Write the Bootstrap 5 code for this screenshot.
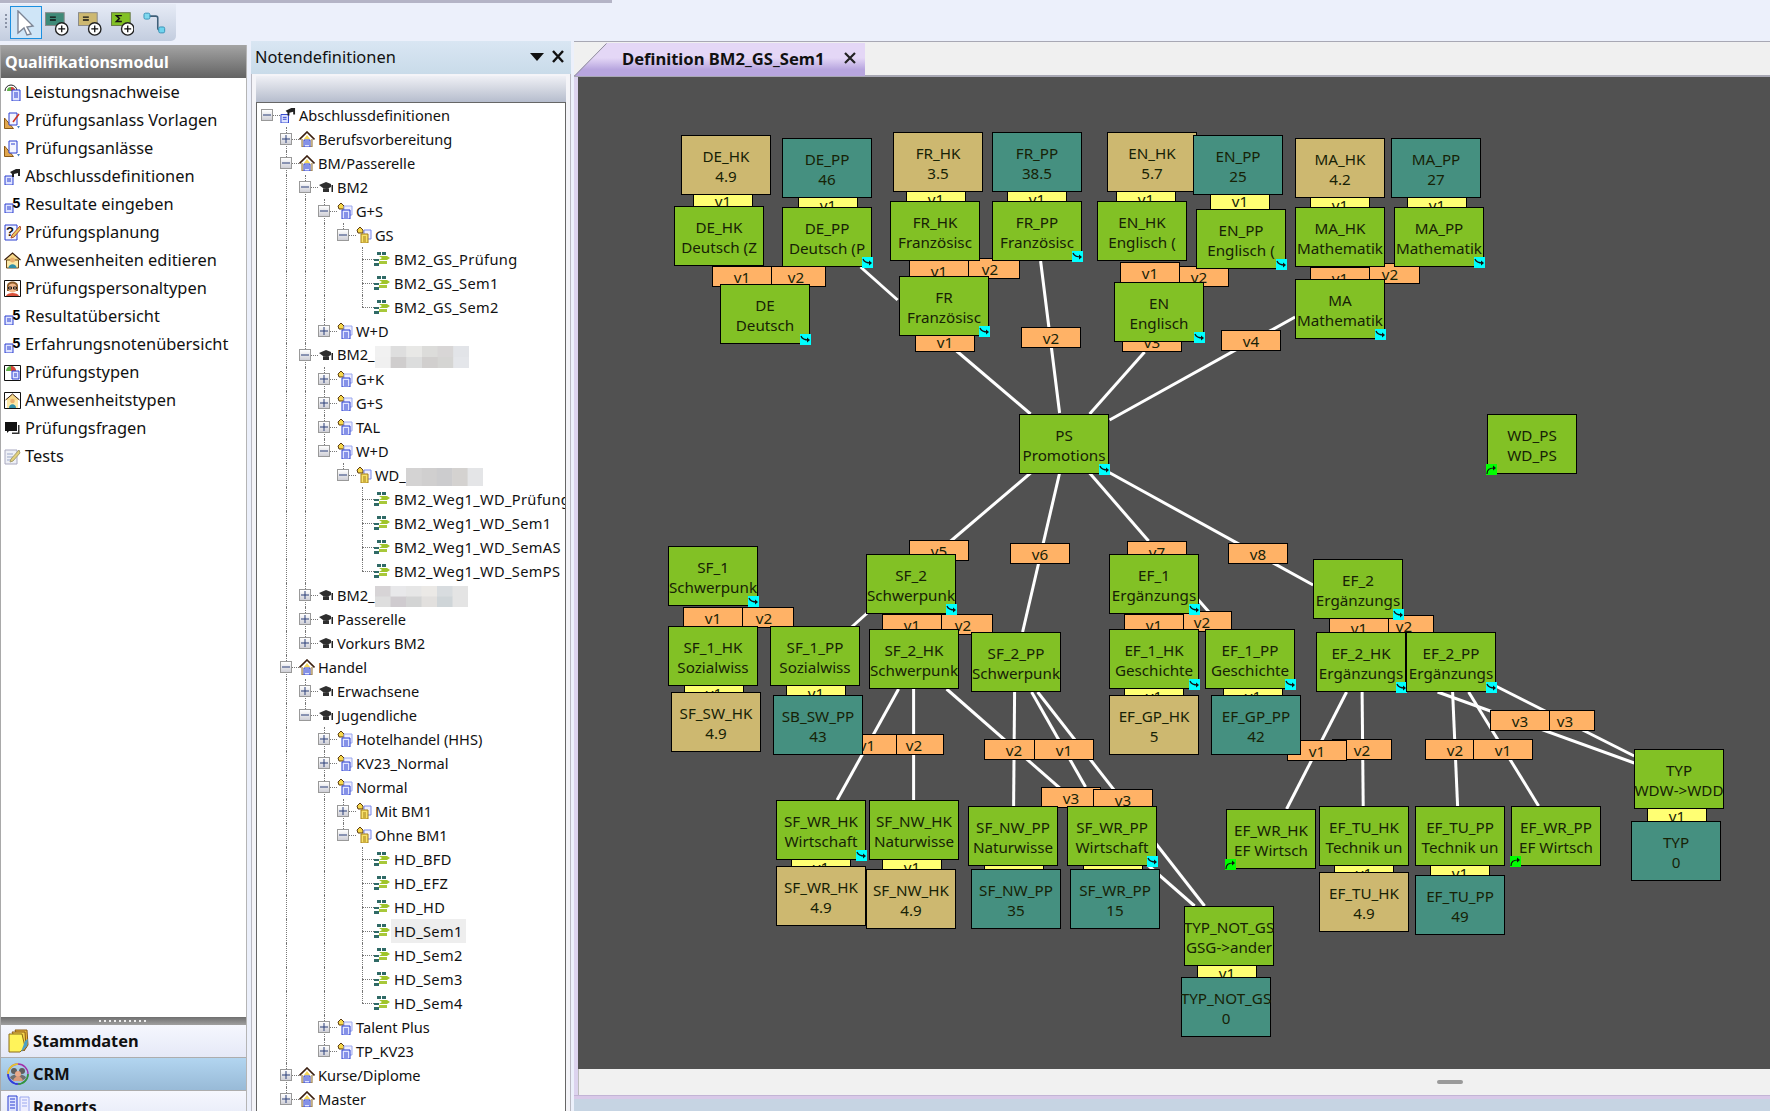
<!DOCTYPE html>
<html lang="de">
<head>
    <meta charset="UTF-8">
    <title>Definition BM2_GS_Sem1</title>
    <link href="https://cdn.jsdelivr.net/npm/bootstrap@5.3.3/dist/css/bootstrap.min.css" rel="stylesheet">
    <style>
        html, body { height: 100%; margin: 0; overflow: hidden; }
        body { background: #ecf0fb; font-family: "Noto Sans", "Liberation Sans", sans-serif; color: #111; width: 1770px; height: 1111px; }
        .top-area { height: 41px; position: relative; }
        .top-line { height: 3px; width: 612px; background: #b4b4c6; }
        .tool-strip { margin-top: 1px; width: 176px; height: 37px; background: linear-gradient(#e6ebf6, #c3cddf); border-radius: 0 0 5px 0; padding: 2px 0 0 5px; }
        .tool-grip { width: 2px; height: 16px; margin: 8px 3px 0 0; background: repeating-linear-gradient(#8b93a6 0 2px, transparent 2px 4px); }
        .tool-sel { width: 33px; height: 33px; background: #cfe5f7; border: 1px solid #1b8fe0; margin-right: 3px; }
        .tool-icon { width: 24px; height: 24px; margin: 6px 9px 0 0; }
        .main-area { height: 1070px; }

        .left-panel { width: 247px; margin-top: 4px; background: #fff; border-left: 1px solid #a9a9a9; border-right: 1px solid #b5b5b5; overflow: hidden; }
        .left-head { height: 33px; flex: none; background: linear-gradient(#a4a4a4, #636363); color: #fff; font-weight: 700; font-size: 16px; line-height: 35px; padding-left: 4px; }
        .left-list { height: 939px; flex: none; }
        .left-item { height: 28px; font-size: 16.4px; line-height: 28px; padding-left: 3px; gap: 4px; }
        .left-item svg { width: 17px; height: 17px; flex: none; }
        .left-split { height: 8px; flex: none; background: linear-gradient(#6f6f6f, #a0a0a0); }
        .split-dots { width: 48px; height: 2px; margin-left: 98px; background: repeating-linear-gradient(90deg, #eee 0 2px, transparent 2px 5px); position: relative; top: 3px; }
        .left-btn { height: 33px; flex: none; font-weight: 700; font-size: 16.4px; padding-left: 5px; gap: 3px; background: linear-gradient(#f5f7fe, #e5e9f7); border-bottom: 1px solid #adadad; }
        .left-btn svg { width: 24px; height: 24px; flex: none; }
        .left-btn.is-active { background: linear-gradient(#b2d5f0, #98bad7); }

        .tree-panel { width: 320px; margin-left: 4px; background: #fff; }
        .tree-head { height: 33px; background: linear-gradient(#d9e6f3, #c9dbe9); font-size: 16.4px; line-height: 33px; padding: 0 6px 2px 4px; }
        .tree-body { border-left: 1px solid #b9b9c2; border-right: 1px solid #b9b9c2; padding: 2px 4px 0; height: 1037px; background: #f4f4f8; }
        .tree-bar { height: 27px; background: linear-gradient(#eff0f5, #b6bdcd); border-bottom: 1px solid #666; }
        .tree-list { background: #fff; height: 1008px; overflow: hidden; border-left: 1px solid #666; border-right: 1px solid #666; }
        .tree-row { height: 24px; position: relative; font-size: 14.6px; line-height: 24px; white-space: nowrap; }
        .tree-toggle { width: 12px; height: 12px; flex: none; border: 1px solid #999; background: linear-gradient(#fff, #cfcfd6); position: relative; z-index: 1; }
        .tree-toggle svg { display: block; width: 10px; height: 10px; }
        .tree-gap { width: 12px; flex: none; }
        .tree-pic { width: 16px; height: 16px; flex: none; margin: 0 3px 0 7px; position: relative; z-index: 1; }
        .leaf-pic { margin-left: 6px; margin-right: 4px; }
        .leaf-text { letter-spacing: .35px; }
        .guide-v { position: absolute; width: 0; border-left: 1px dotted #777; }
        .guide-h { position: absolute; top: 12px; height: 0; border-top: 1px dotted #777; }
        .tree-sel { background: #eeeeee; padding: 0 3px; margin-left: -3px; }
        .blur-patch { display: inline-block; vertical-align: middle; }

        .doc-panel { margin-left: 3px; flex: 1 1 0; min-width: 0; }
        .tab-strip { height: 36px; background: #f0f0f0; border-top: 1px solid #a8a8b4; border-bottom: 2px solid #a8a8b4; position: relative; }
        .doc-tab { position: absolute; left: 0; top: 1px; width: 291px; height: 33px; background: linear-gradient(#e4d7f6 0, #e4d7f6 45%, #b8a6df 80%, #b8a6df 100%); clip-path: polygon(0 100%, 32px 0, 100% 0, 100% 100%); font-weight: 700; font-size: 16.6px; line-height: 31px; padding-left: 48px; gap: 18px; }
        .tab-slant { position: absolute; left: 0; top: 1px; }
        .doc-frame { border-left: 4px solid #dcd3ee; }
        .flow-canvas { height: 992px; background: #515151; position: relative; overflow: hidden; font-size: 15.2px; color: #172206; }
        .flow-lines { position: absolute; left: 0; top: 0; }
        .flow-node, .flow-tag { position: absolute; border: 1px solid #000; text-align: center; white-space: nowrap; }
        .flow-node { width: 90px; height: 60px; padding-top: 10px; line-height: 20px; }
        .flow-tag { width: 60px; height: 21px; line-height: 20px; overflow: hidden; }
        .node-clip { overflow: hidden; display: flex; flex-direction: column; align-items: center; height: 40px; margin: 0 -1px; }
        .fill-green { background: #82c125; }
        .fill-tan { background: #cdb870; }
        .fill-teal { background: #459080; }
        .fill-orange { background: #ffb266; }
        .fill-yellow { background: #ffff73; }
        .node-jump { position: absolute; width: 11px; height: 11px; bottom: -2px; }
        .node-jump svg { display: block; width: 11px; height: 11px; }
        .jump-out { right: -2px; background: #00ffff; }
        .jump-in { left: -2px; background: #00ff00; }
        .doc-foot { height: 26px; background: #f1f1f1; position: relative; border-left: 1px solid #bbb; }
        .foot-grip { position: absolute; left: 858px; top: 11px; width: 26px; height: 4px; border-radius: 2px; background: #9a9a9a; }
        .foot-line { height: 4px; background: #d8c9e8; border-top: 1px solid #c3b4d6; }
        .foot-rest { height: 12px; background: #c6d4e3; }
    </style>
</head>
<body>
<svg width="0" height="0" class="position-absolute">
    <defs>
        <symbol id="i-house" viewBox="0 0 16 16"><path d="M3 8v8h10V8" fill="#fff4cf" stroke="#8a6a30"/><path d="M0.5 8.5 8 1l7.5 7.5" fill="none" stroke="#3b2010" stroke-width="1.6"/><path d="M5 8l3-4 3 4z" fill="#f5d75a"/><path d="M5 9h6v7H5z" fill="#dfe4ff" stroke="#2a3fd0"/><path d="M6 11h4M6 13h4" stroke="#2a3fd0"/></symbol>
        <symbol id="i-hat" viewBox="0 0 16 16"><path d="M1 6l7-3 5 2v3l-2 1v4H5V9z" fill="#2f2f2f"/><path d="M13.5 6v7H15V6z" fill="#222"/><path d="M5 9l4 1 2-1v1H5z" fill="#777"/></symbol>
        <symbol id="i-grp" viewBox="0 0 16 16"><path d="M1 3l3-3 3 3v3H2z" fill="#f7d84a" stroke="#5b3a10"/><path d="M7 3h8v9H7z" fill="#eef" stroke="#9aa7ee"/><path d="M5 7h8v9H5z" fill="#dfe4ff" stroke="#2a3fd0"/><path d="M7 10h4M7 12h4M7 14h4" stroke="#2a3fd0"/></symbol>
        <symbol id="i-grpy" viewBox="0 0 16 16"><path d="M1 3l3-3 3 3v3H2z" fill="#f7d84a" stroke="#5b3a10"/><path d="M8 3h7v9H8z" fill="#eef" stroke="#7a88e8"/><path d="M5 7h7v9H5z" fill="#f8e26a" stroke="#a37c14"/><path d="M7 10h3M7 12h3M7 14h3" stroke="#a37c14"/></symbol>
        <symbol id="i-leaf" viewBox="0 0 16 16"><path d="M3 1h4v3H3zM8 1h4v3H8zM0 12h5v3H0zM0 8h5v2H0z" fill="#2f6a66"/><path d="M5 5h8l3 2-3 2H5l3-2z" fill="#9fc428"/><path d="M5 10h8v3H5z" fill="#a8c83a"/></symbol>
        <symbol id="i-minus" viewBox="0 0 10 10"><path d="M1 5h8" stroke="#2b3f79"/></symbol>
        <symbol id="i-plus" viewBox="0 0 10 10"><path d="M1 5h8M5 1v8" stroke="#2b3f79"/></symbol>

        <symbol id="i-lei" viewBox="0 0 17 17"><path d="M1 7a6 6 0 0 1 12 0" fill="none" stroke="#222" stroke-width="1"/><path d="M3 7a4 4 0 0 1 8 0z" fill="#5fb04a"/><path d="M7 3a4 4 0 0 1 4 4H7z" fill="#d8423a"/><path d="M8 6h8v11H8z" fill="#dfe4ff" stroke="#2a3fd0"/><path d="M10 9h4M10 11h4M10 13h4" stroke="#2a3fd0"/></symbol>
        <symbol id="i-vor" viewBox="0 0 17 17"><path d="M0.5 16.5V6l9 10.5z" fill="#e0a64e" stroke="#8a5a18"/><path d="M5 1h8v12H5z" fill="#f4f5ff" stroke="#2a3fd0"/><path d="M15 2L9 10" stroke="#cc3322" stroke-width="1.6"/><path d="M13 14l3 0-1.5 2.5z" fill="#4a7fc0"/></symbol>
        <symbol id="i-anl" viewBox="0 0 17 17"><path d="M0.5 16.5V6l9 10.5z" fill="#e0a64e" stroke="#8a5a18"/><path d="M5 1h8v12H5z" fill="#f4f5ff" stroke="#2a3fd0"/><path d="M7 4h4" stroke="#2a3fd0"/><path d="M13 14l3 0-1.5 2.5z" fill="#4a7fc0"/></symbol>
        <symbol id="i-abs" viewBox="0 0 17 17"><path d="M1 8h8v9H1z" fill="#dfe4ff" stroke="#2a3fd0"/><path d="M3 11h4M3 13h4" stroke="#2a3fd0"/><path d="M6 4l6-3h4v7h-2V5l-4 1v3H8V6z" fill="#222"/></symbol>
        <symbol id="i-res" viewBox="0 0 17 17"><path d="M1 8h8v9H1z" fill="#dfe4ff" stroke="#2a3fd0"/><path d="M3 11h4M3 13h4" stroke="#2a3fd0"/><text x="8.5" y="12" font-family="Liberation Sans" font-weight="700" font-size="14" fill="#000">5</text></symbol>
        <symbol id="i-plan" viewBox="0 0 17 17"><path d="M1 1h12v15H1z" fill="#f4f5ff" stroke="#2a3fd0"/><text x="2" y="12" font-family="Liberation Sans" font-weight="700" font-size="13" fill="#111">?</text><path d="M16 2L8 11l-1 3 3-1 7-8z" fill="#e8c75a" stroke="#b04a30"/></symbol>
        <symbol id="i-anw" viewBox="0 0 17 17"><path d="M0.5 8L8.5 1l8 7" fill="#f7d98a" stroke="#3b2010" stroke-width="1.2"/><path d="M2.5 8h12v8h-12z" fill="#fbe9a8" stroke="#6b4a18"/><circle cx="8.5" cy="8" r="2.5" fill="#e8b070"/><path d="M4.5 16c0-5 8-5 8 0z" fill="#2f8fa8"/></symbol>
        <symbol id="i-per" viewBox="0 0 17 17"><path d="M0.5 0.5h16v16H0.5z" fill="#fff" stroke="#111"/><path d="M3 6c0-6 11-6 11 0v5H3z" fill="#8a5a28"/><circle cx="8.5" cy="8" r="4.5" fill="#f2b88a"/><path d="M4.5 7h3v2h-3zM9.5 7h3v2h-3z" fill="none" stroke="#222"/><path d="M2 16c1-4 12-4 13 0z" fill="#d9503a"/></symbol>
        <symbol id="i-typ" viewBox="0 0 17 17"><path d="M0.5 1.5h16v15H0.5z" fill="#fff" stroke="#111"/><path d="M2 7a5 5 0 0 1 10 0z" fill="#5fb04a"/><path d="M7 2a5 5 0 0 1 5 5H7z" fill="#d8423a"/><path d="M8 7h7v8H8z" fill="#dfe4ff" stroke="#2a3fd0"/><path d="M10 10h3M10 12h3" stroke="#2a3fd0"/></symbol>
        <symbol id="i-anwt" viewBox="0 0 17 17"><path d="M0.5 0.5h16v16H0.5z" fill="#fff" stroke="#111"/><path d="M1.5 8L8.5 2l7 6" fill="#f7d98a" stroke="#3b2010"/><path d="M3 8h11v8H3z" fill="#fbe9a8"/><circle cx="8.5" cy="9" r="2.3" fill="#e8b070"/><path d="M5 16c0-5 7-5 7 0z" fill="#2f8fa8"/></symbol>
        <symbol id="i-frag" viewBox="0 0 17 17"><path d="M1 2h12v9H5l-2 2v-2H1z" fill="#111"/><path d="M14 5h1.5v9H8v-1.5h6z" fill="#333"/></symbol>
        <symbol id="i-test" viewBox="0 0 17 17"><path d="M1 2h12v14H1z" fill="#eef0f6" stroke="#a9a9c0"/><path d="M3 6h6M3 9h6M3 12h6" stroke="#9ba7c8"/><path d="M15 2L7 11l-1 3 3-1 7-8z" fill="#e2d07a" stroke="#a8a070"/></symbol>
        <symbol id="i-stamm" viewBox="0 0 24 24"><path d="M9 1h12l1 15-4 6z" fill="#e9b93a" stroke="#8a5a18"/><path d="M6 3h13l1 16-4 3z" fill="#f4d34a" stroke="#8a5a18"/><path d="M3 5h13l3 13-5 5H3z" fill="#fff35a" stroke="#8a6a18"/><path d="M19 12l3-2-1 7-6 6z" fill="#4aa0c8"/></symbol>
        <symbol id="i-crm" viewBox="0 0 24 24"><circle cx="12" cy="12" r="10" fill="none" stroke="#a32ea8" stroke-width="1.4"/><path d="M2 12a10 10 0 0 1 10-10" fill="none" stroke="#e8c82a" stroke-width="1.6"/><path d="M2 12a10 10 0 0 0 10 10" fill="none" stroke="#2a3fe0" stroke-width="1.6"/><path d="M12 22a10 10 0 0 0 10-10" fill="none" stroke="#2c9c3a" stroke-width="1.6"/><circle cx="8" cy="9" r="3" fill="#5e5e5e"/><circle cx="16" cy="9" r="3" fill="#5e5e5e"/><path d="M4 16c1-5 15-5 16 0l-4 3H8z" fill="#6f6f6f"/><circle cx="12" cy="12" r="3" fill="#e9a98a"/><path d="M7 19c1-6 9-6 10 0z" fill="#d99a7a"/></symbol>
        <symbol id="i-rep" viewBox="0 0 24 24"><path d="M2 1h9v17H2z" fill="#dfe4ff" stroke="#2a3fd0"/><path d="M4 4h5M4 7h5M4 10h5M4 13h5" stroke="#2a3fd0"/><path d="M14 2h9v16h-9z" fill="#eef" stroke="#9aa7ee"/><path d="M16 5h5M16 8h5M16 11h5" stroke="#9aa7ee"/></symbol>
        <symbol id="i-jumpout" viewBox="0 0 11 11"><path d="M1 2c1 3 3 4 8 4" fill="none" stroke="#111" stroke-width="1.2"/><path d="M7 3.5 10 6 7 8.5z" fill="#111"/></symbol>
        <symbol id="i-jumpin" viewBox="0 0 11 11"><path d="M1 10c0-4 2-6 7-6" fill="none" stroke="#111" stroke-width="1.2"/><path d="M7 1.5 10 4 7 6.5z" fill="#111"/></symbol>
    </defs>
</svg>

<div class="top-area">
    <div class="top-line"></div>
    <div class="tool-strip d-flex align-items-start">
        <div class="tool-grip"></div>
        <div class="tool-sel d-flex align-items-center justify-content-center">
            <svg width="22" height="26" viewBox="0 0 22 26"><path d="M3 1l15 15-6 1 4 7-4 1-3-7-6 5z" fill="#fff" stroke="#7c8494" stroke-width="1.4"/></svg>
        </div>
        <svg class="tool-icon" viewBox="0 0 24 24"><rect x="0.5" y="0.5" width="19" height="13" fill="#3f8a78" stroke="#8a8a8a"/><path d="M5 5h6M5 8h6" stroke="#111" stroke-width="1.4"/><circle cx="17" cy="17" r="6.3" fill="#fff" stroke="#222" stroke-width="1.4"/><path d="M13.5 17h7M17 13.5v7" stroke="#111" stroke-width="1.3"/></svg>
        <svg class="tool-icon" viewBox="0 0 24 24"><rect x="0.5" y="0.5" width="19" height="13" fill="#cdb870" stroke="#8a8a8a"/><path d="M5 5h6M5 8h6" stroke="#111" stroke-width="1.4"/><circle cx="17" cy="17" r="6.3" fill="#fff" stroke="#222" stroke-width="1.4"/><path d="M13.5 17h7M17 13.5v7" stroke="#111" stroke-width="1.3"/></svg>
        <svg class="tool-icon" viewBox="0 0 24 24"><rect x="0.5" y="0.5" width="19" height="13" fill="#82c125" stroke="#6a7a4a"/><path d="M11 3.5H5.5l3 3-3 3H11" fill="none" stroke="#111" stroke-width="1.5"/><circle cx="17" cy="17" r="6.3" fill="#fff" stroke="#222" stroke-width="1.4"/><path d="M13.5 17h7M17 13.5v7" stroke="#111" stroke-width="1.3"/></svg>
        <svg class="tool-icon" viewBox="0 0 24 24"><path d="M6 4h7a2 2 0 0 1 2 2v10a2 2 0 0 0 2 2h2" fill="none" stroke="#3f5f78" stroke-width="1.6"/><rect x="1" y="1" width="6" height="6" rx="1.5" fill="#7fd8ee" stroke="#3a93b8"/><rect x="16" y="15" width="6" height="6" rx="1.5" fill="#6fd4ee" stroke="#3a93b8"/></svg>
    </div>
</div>

<div class="main-area d-flex">
    <div class="left-panel d-flex flex-column">
        <div class="left-head">Qualifikationsmodul</div>
        <div class="left-list" id="leftList"></div>
        <div class="left-split"><div class="split-dots"></div></div>
        <div class="left-btn d-flex align-items-center"><svg><use href="#i-stamm"/></svg>Stammdaten</div>
        <div class="left-btn is-active d-flex align-items-center"><svg><use href="#i-crm"/></svg>CRM</div>
        <div class="left-btn d-flex align-items-center"><svg><use href="#i-rep"/></svg>Reports</div>
    </div>

    <div class="tree-panel d-flex flex-column">
        <div class="tree-head d-flex align-items-center justify-content-between">
            <span>Notendefinitionen</span>
            <svg width="36" height="16" viewBox="0 0 36 16"><path d="M1 4h14l-7 8z" fill="#111"/><path d="M24 2l10 11M34 2L24 13" stroke="#111" stroke-width="2.4"/></svg>
        </div>
        <div class="tree-body">
            <div class="tree-bar"></div>
            <div class="tree-list" id="treeList"></div>
        </div>
    </div>

    <div class="doc-panel d-flex flex-column">
        <div class="tab-strip">
            <div class="doc-tab d-flex">
                <span>Definition BM2_GS_Sem1</span>
                <svg class="mt-2" width="14" height="14" viewBox="0 0 14 14"><path d="M2 2l10 10M12 2L2 12" stroke="#222" stroke-width="2.2"/></svg>
            </div>
            <svg class="tab-slant" width="34" height="33"><path d="M0.5 33 32.5 0.5" stroke="#8f8f99" fill="none"/></svg>
        </div>
        <div class="doc-frame">
            <div class="flow-canvas" id="flow">
                <svg class="flow-lines" width="1192" height="992" id="flowLines"></svg>
            </div>
            <div class="doc-foot"><div class="foot-grip"></div></div>
        </div>
        <div class="foot-line"></div>
        <div class="foot-rest"></div>
    </div>
</div>

<script>
    var leftItems = [
        ['i-lei', 'Leistungsnachweise'], ['i-vor', 'Prüfungsanlass Vorlagen'], ['i-anl', 'Prüfungsanlässe'],
        ['i-abs', 'Abschlussdefinitionen'], ['i-res', 'Resultate eingeben'], ['i-plan', 'Prüfungsplanung'],
        ['i-anw', 'Anwesenheiten editieren'], ['i-per', 'Prüfungspersonaltypen'], ['i-res', 'Resultatübersicht'],
        ['i-res', 'Erfahrungsnotenübersicht'], ['i-typ', 'Prüfungstypen'], ['i-anwt', 'Anwesenheitstypen'],
        ['i-frag', 'Prüfungsfragen'], ['i-test', 'Tests']
    ];
    document.getElementById('leftList').innerHTML = leftItems.map(function (it) {
        return '<div class="left-item d-flex align-items-center"><svg><use href="#' + it[0] + '"/></svg><span>' + it[1] + '</span></div>';
    }).join('');

    function blurPatch(w, h, cols) {
        var rows = cols.length, out = '';
        cols.forEach(function (row, r) {
            row.forEach(function (c, i) {
                out += '<rect x="' + (i * w / row.length) + '" y="' + (r * h / rows) + '" width="' + (w / row.length + 0.5) + '" height="' + (h / rows + 0.5) + '" fill="' + c + '"/>';
            });
        });
        return '<svg class="blur-patch" width="' + w + '" height="' + h + '">' + out + '</svg>';
    }
    var blurA = blurPatch(94, 22, [['#f1f1f1', '#dedede', '#e8e8e6', '#dcdcda', '#d8d6d6', '#e2e4e8'], ['#f0f0f0', '#cfcdcd', '#dcdddd', '#d1cfce', '#d5d5d3', '#e4e6ea']]);
    var blurB = blurPatch(77, 18, [['#d4d3d3', '#d0cfcf', '#ccccce', '#d4d2d0', '#e4e5e7']]);
    var blurC = blurPatch(93, 21, [['#d7d4d6', '#e8e8ea', '#e6e6e6', '#ebe9e6', '#d8dcdf', '#e4e4e4'], ['#dedede', '#cfcbcf', '#d3d4d4', '#e2e0de', '#cfd5d8', '#e4e4e4']]);

    // level, state (- + or empty), icon, text
    var tree = [
        [0, '-', 'i-abs', 'Abschlussdefinitionen'], [1, '+', 'i-house', 'Berufsvorbereitung'], [1, '-', 'i-house', 'BM/Passerelle'],
        [2, '-', 'i-hat', 'BM2'], [3, '-', 'i-grp', 'G+S'], [4, '-', 'i-grpy', 'GS'],
        [5, '', 'i-leaf', 'BM2_GS_Prüfung'], [5, '', 'i-leaf', 'BM2_GS_Sem1'], [5, '', 'i-leaf', 'BM2_GS_Sem2'],
        [3, '+', 'i-grp', 'W+D'], [2, '-', 'i-hat', 'BM2_' + blurA], [3, '+', 'i-grp', 'G+K'], [3, '+', 'i-grp', 'G+S'], [3, '+', 'i-grp', 'TAL'],
        [3, '-', 'i-grp', 'W+D'], [4, '-', 'i-grpy', 'WD_' + blurB],
        [5, '', 'i-leaf', 'BM2_Weg1_WD_Prüfung'], [5, '', 'i-leaf', 'BM2_Weg1_WD_Sem1'], [5, '', 'i-leaf', 'BM2_Weg1_WD_SemAS'], [5, '', 'i-leaf', 'BM2_Weg1_WD_SemPS'],
        [2, '+', 'i-hat', 'BM2_' + blurC], [2, '+', 'i-hat', 'Passerelle'], [2, '+', 'i-hat', 'Vorkurs BM2'],
        [1, '-', 'i-house', 'Handel'], [2, '+', 'i-hat', 'Erwachsene'], [2, '-', 'i-hat', 'Jugendliche'],
        [3, '+', 'i-grp', 'Hotelhandel (HHS)'], [3, '+', 'i-grp', 'KV23_Normal'], [3, '-', 'i-grp', 'Normal'],
        [4, '+', 'i-grpy', 'Mit BM1'], [4, '-', 'i-grpy', 'Ohne BM1'],
        [5, '', 'i-leaf', 'HD_BFD'], [5, '', 'i-leaf', 'HD_EFZ'], [5, '', 'i-leaf', 'HD_HD'], [5, '', 'i-leaf', 'HD_Sem1', 1],
        [5, '', 'i-leaf', 'HD_Sem2'], [5, '', 'i-leaf', 'HD_Sem3'], [5, '', 'i-leaf', 'HD_Sem4'],
        [3, '+', 'i-grp', 'Talent Plus'], [3, '+', 'i-grp', 'TP_KV23'], [1, '+', 'i-house', 'Kurse/Diplome'], [1, '+', 'i-house', 'Master']
    ];
    var treeLeft = 257.5;
    function centerX(level) { return 267.5 + 19 * level - treeLeft; }
    function hasLater(i, level) {
        for (var j = i + 1; j < tree.length; j++) {
            if (tree[j][0] <= level) return tree[j][0] === level;
        }
        return false;
    }
    document.getElementById('treeList').innerHTML = tree.map(function (r, i) {
        var lv = r[0], cx = centerX(lv), guides = '';
        for (var k = 1; k < lv; k++) {
            if (hasLater(i, k)) guides += '<span class="guide-v" style="left:' + centerX(k) + 'px;top:0;bottom:0"></span>';
        }
        if (lv > 0) {
            guides += '<span class="guide-v" style="left:' + cx + 'px;top:0;' + (hasLater(i, lv) ? 'bottom:0' : 'height:12px') + '"></span>';
        }
        guides += '<span class="guide-h" style="left:' + cx + 'px;width:' + (r[1] ? 13 : 12) + 'px"></span>';
        var toggle = r[1]
            ? '<span class="tree-toggle"><svg><use href="#' + (r[1] === '-' ? 'i-minus' : 'i-plus') + '"/></svg></span>'
            : '<span class="tree-gap"></span>';
        var pic = '<svg class="tree-pic' + (r[1] ? '' : ' leaf-pic') + '"><use href="#' + r[2] + '"/></svg>';
        var cls = (r[1] ? '' : 'leaf-text') + (r[4] ? ' tree-sel' : '');
        var label = '<span class="flex-shrink-0 ' + cls + '">' + r[3] + '</span>';
        return '<div class="tree-row d-flex align-items-center">' + guides +
            '<span class="flex-shrink-0" style="width:' + (cx - 6) + 'px"></span>' + toggle + pic + label + '</div>';
    }).join('');

    // diagram, all coordinates are page coordinates
    var originX = 578.4, originY = 77;
    var wires = [
        [861, 267, 898, 300], [1041, 261, 1060, 413], [957, 351, 1031, 414], [1145, 352, 1090, 414], [1295.5, 317, 1110, 420],
        [1031, 473, 950, 542], [1060, 473, 1023, 632], [1090, 473, 1149, 541], [1105, 470, 1313.5, 585],
        [871, 610, 851, 628], [899, 689, 837.5, 800], [914, 689, 914, 800], [947, 689, 1195, 906],
        [1015, 692, 1014, 806], [1032, 692, 1086, 787], [1038, 692, 1205, 906], [1190, 590, 1212, 615],
        [1347, 692, 1287, 809], [1362.5, 692, 1363.6, 806], [1453, 692, 1458, 806], [1469, 692, 1539, 806],
        [1495, 685.5, 1634.6, 756], [1438, 692, 1634.6, 763]
    ];
    document.getElementById('flowLines').innerHTML = wires.map(function (w) {
        return '<line x1="' + (w[0] - originX) + '" y1="' + (w[1] - originY) + '" x2="' + (w[2] - originX) + '" y2="' + (w[3] - originY) + '" stroke="#fff" stroke-width="3"/>';
    }).join('');

    // the yellow tags start behind the box above them
    var yellowTags = [
        [693, 190], [798, 194], [906.5, 188], [1007, 188], [1116, 188], [1210, 190], [1310.5, 194], [1407, 194],
        [684.5, 682], [786.6, 682], [1124.6, 685], [1223.6, 684.5], [791.6, 856], [882.7, 856], [984.5, 862], [1083.6, 862],
        [1647.6, 804.5], [1334.6, 861.5], [1430.6, 861.5], [1197.5, 961.6]
    ];
    var orangeTags = [
        [766, 266, 'v2'], [712, 266, 'v1'], [960.6, 258, 'v2'], [909, 260, 'v1'], [915.6, 331, 'v1'], [1021, 327, 'v2'],
        [1169, 266, 'v2'], [1120, 262, 'v1'], [1122, 331, 'v3'], [1221.6, 330, 'v4'], [1360, 263, 'v2'], [1310.5, 267, 'v1'],
        [909.5, 540, 'v5'], [1010.5, 543, 'v6'], [1127.6, 541, 'v7'], [1228, 543, 'v8'],
        [734.5, 607, 'v2'], [683, 607, 'v1'], [933.5, 614, 'v2'], [882.7, 614, 'v1'], [1172, 611, 'v2'], [1124.6, 614, 'v1'], [1374.7, 615, 'v2'], [1329.6, 617, 'v1'],
        [884.5, 734, 'v2'], [837.5, 734, 'v1'], [984.5, 739, 'v2'], [1034.6, 739, 'v1'], [1041.5, 787, 'v3'], [1093, 789, 'v3'],
        [1332.6, 739, 'v2'], [1287, 740, 'v1'], [1425, 739, 'v2'], [1473.5, 739, 'v1'], [1535.4, 710, 'v3'], [1490, 710, 'v3']
    ];
    // fill, x, y, line 1, line 2, corner marker
    var nodes = [
        ['tan', 681, 135, 'DE_HK', '4.9'], ['teal', 782, 138, 'DE_PP', '46'], ['tan', 893, 132, 'FR_HK', '3.5'], ['teal', 992, 132, 'FR_PP', '38.5'],
        ['tan', 1107, 132, 'EN_HK', '5.7'], ['teal', 1193.5, 135, 'EN_PP', '25'], ['tan', 1295.5, 138, 'MA_HK', '4.2'], ['teal', 1391, 138, 'MA_PP', '27'],
        ['green', 674, 206, 'DE_HK', 'Deutsch (Z'], ['green', 782, 207, 'DE_PP', 'Deutsch (P', 'out'], ['green', 890, 201, 'FR_HK', 'Französisc'], ['green', 992, 201, 'FR_PP', 'Französisc', 'out'],
        ['green', 1097.5, 201, 'EN_HK', 'Englisch ('], ['green', 1196, 209, 'EN_PP', 'Englisch (', 'out'], ['green', 1295.5, 207, 'MA_HK', 'Mathematik'], ['green', 1394, 207, 'MA_PP', 'Mathematik', 'out'],
        ['green', 720, 284, 'DE', 'Deutsch', 'out'], ['green', 899, 276, 'FR', 'Französisc', 'out'], ['green', 1114, 282, 'EN', 'Englisch', 'out'], ['green', 1295.5, 279, 'MA', 'Mathematik', 'out'],
        ['green', 1019.6, 414, 'PS', 'Promotions', 'out'], ['green', 1487, 414, 'WD_PS', 'WD_PS', 'in'],
        ['green', 668, 546, 'SF_1', 'Schwerpunk', 'out'], ['green', 866.6, 554, 'SF_2', 'Schwerpunk', 'out'], ['green', 1109.6, 554, 'EF_1', 'Ergänzungs', 'out'], ['green', 1313.5, 558.5, 'EF_2', 'Ergänzungs', 'out'],
        ['green', 668, 626, 'SF_1_HK', 'Sozialwiss'], ['green', 770.5, 626, 'SF_1_PP', 'Sozialwiss'], ['green', 869, 629, 'SF_2_HK', 'Schwerpunk'], ['green', 971.5, 632, 'SF_2_PP', 'Schwerpunk'],
        ['green', 1109.6, 629, 'EF_1_HK', 'Geschichte', 'out'], ['green', 1205, 629, 'EF_1_PP', 'Geschichte', 'out'], ['green', 1316.6, 632, 'EF_2_HK', 'Ergänzungs', 'out'], ['green', 1406.5, 632, 'EF_2_PP', 'Ergänzungs', 'out'],
        ['tan', 671.4, 692, 'SF_SW_HK', '4.9'], ['teal', 773, 695, 'SB_SW_PP', '43'], ['tan', 1109.6, 695, 'EF_GP_HK', '5'], ['teal', 1211, 695, 'EF_GP_PP', '42'],
        ['green', 776.7, 800, 'SF_WR_HK', 'Wirtschaft', 'out'], ['green', 869, 800, 'SF_NW_HK', 'Naturwisse'], ['green', 968.4, 806, 'SF_NW_PP', 'Naturwisse'], ['green', 1067.5, 806, 'SF_WR_PP', 'Wirtschaft', 'out'],
        ['tan', 776.7, 866, 'SF_WR_HK', '4.9'], ['tan', 866, 869, 'SF_NW_HK', '4.9'], ['teal', 971.5, 869, 'SF_NW_PP', '35'], ['teal', 1070.6, 869, 'SF_WR_PP', '15'],
        ['green', 1226, 809, 'EF_WR_HK', 'EF Wirtsch', 'in'], ['green', 1319, 806, 'EF_TU_HK', 'Technik un'], ['green', 1415, 806, 'EF_TU_PP', 'Technik un'], ['green', 1511, 806, 'EF_WR_PP', 'EF Wirtsch', 'in'],
        ['tan', 1319, 872, 'EF_TU_HK', '4.9'], ['teal', 1415, 875, 'EF_TU_PP', '49'],
        ['green', 1634.6, 749, 'TYP', 'WDW-&gt;WDD'], ['teal', 1631.5, 821, 'TYP', '0'],
        ['green', 1184.5, 906, 'TYP_NOT_GS', 'GSG-&gt;ander'], ['teal', 1181.5, 977, 'TYP_NOT_GS', '0']
    ];
    function place(x, y) {
        return 'left:' + Math.round(x - originX) + 'px;top:' + Math.round(y - originY) + 'px';
    }
    var html = '';
    yellowTags.forEach(function (t) {
        html += '<div class="flow-tag fill-yellow" style="' + place(t[0], t[1]) + '">v1</div>';
    });
    orangeTags.forEach(function (t) {
        html += '<div class="flow-tag fill-orange" style="' + place(t[0], t[1]) + '">' + t[2] + '</div>';
    });
    nodes.forEach(function (n) {
        var jump = '';
        if (n[5] === 'out') jump = '<span class="node-jump jump-out"><svg><use href="#i-jumpout"/></svg></span>';
        if (n[5] === 'in') jump = '<span class="node-jump jump-in"><svg><use href="#i-jumpin"/></svg></span>';
        html += '<div class="flow-node fill-' + n[0] + '" style="' + place(n[1], n[2]) + '"><div class="node-clip"><span>' + n[3] + '</span><span>' + n[4] + '</span></div>' + jump + '</div>';
    });
    document.getElementById('flow').insertAdjacentHTML('beforeend', html);
</script>
<script src="https://cdn.jsdelivr.net/npm/bootstrap@5.3.3/dist/js/bootstrap.bundle.min.js"></script>
</body>
</html>
